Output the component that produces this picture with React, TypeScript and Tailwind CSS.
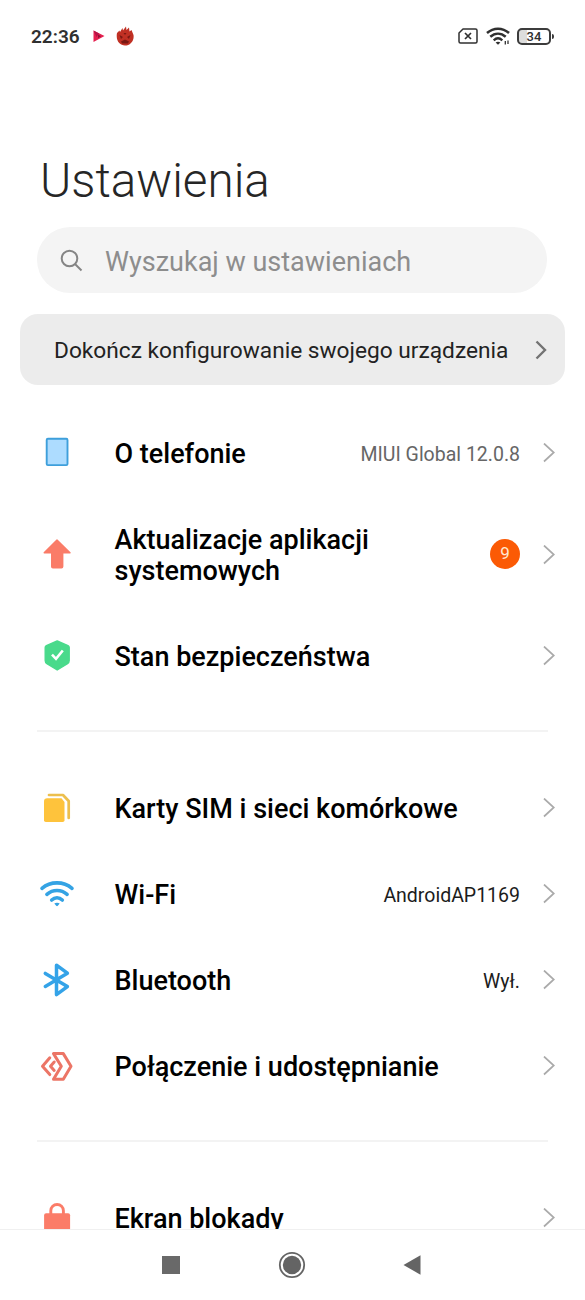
import React from "react";

type Row = {
  label: React.ReactNode;
  icon: React.ReactNode;
  value?: string;
  valueClass?: string;
  badge?: number;
  tall?: boolean;
};

function Icon({ children }: { children: React.ReactNode }) {
  return (
    <svg width="40" height="40" viewBox="0 0 40 40" fill="none" className="shrink-0">
      {children}
    </svg>
  );
}

const PhoneIcon = () => (
  <Icon>
    <rect x="9.7" y="5.7" width="20.8" height="26.4" rx="1.2" fill="#addcff" stroke="#3e9fdb" strokeWidth="1.9" />
  </Icon>
);

const UpdateIcon = () => (
  <Icon>
    <path
      d="M20 5 33 17.8H25.7V31.5a1.2 1.2 0 0 1-1.2 1.2h-8.6a1.2 1.2 0 0 1-1.2-1.2V17.8H7.2Z"
      fill="#fa7c68"
      stroke="#fa7c68"
      strokeWidth="1.4"
      strokeLinejoin="round"
    />
  </Icon>
);

const ShieldIcon = () => (
  <Icon>
    <path
      d="M20.2 5 31 9.6Q32.2 10.2 32.2 11.5V24.5Q32.2 26.5 30.500 27.700L20.200 34 9.900 27.700Q8.200 26.500 8.200 24.500V11.500Q8.200 10.200 9.400 9.600Z"
      fill="#49da8b"
      stroke="#49da8b"
      strokeWidth="1.4"
      strokeLinejoin="round"
    />
    <path d="m15 18.600 4 4.200 6.800-8.300" stroke="#fff" strokeWidth="2.600" />
  </Icon>
);

const SimIcon = () => (
  <Icon>
    <path d="M13.500 10.300H24.500L27.500 14V32.200a1.800 1.800 0 0 1-1.800 1.800H8.800A1.800 1.800 0 0 1 7 32.200V13.500Q7 10.300 10.200 10.300Z" fill="#fec33c" />
    <path d="M12 7H26L31.700 13V30" stroke="#ecbf4e" strokeWidth="2.700" strokeLinecap="round" strokeLinejoin="round" />
  </Icon>
);

const WifiIcon = () => (
  <Icon>
    <g stroke="#34a3e4" strokeWidth="3.600" strokeLinecap="round">
      <path d="M5 14.300C13.500 7 26.500 7 35 14.300" />
      <path d="M9.900 20.300C15.800 15.200 24.200 15.200 30.100 20.300" />
      <path d="M14.700 26C17.800 23.200 22.200 23.200 25.300 26" />
    </g>
    <path d="M17.300 29.600Q20 27.800 22.700 29.600L20.800 31.800Q20 32.600 19.200 31.800Z" fill="#34a3e4" />
  </Icon>
);

const BluetoothIcon = () => (
  <Icon>
    <path
      d="M8.300 13.400 30.400 26.600 19.500 34.600V5.200L30.400 13.200 8.300 26.400"
      stroke="#34a3e8"
      strokeWidth="3.500"
      strokeLinecap="round"
      strokeLinejoin="round"
    />
  </Icon>
);

const ShareIcon = () => (
  <Icon>
    <g stroke="#ec7566" strokeWidth="3" strokeLinejoin="round" strokeLinecap="round">
      <path d="M16.500 7.600H26.300L34 20.200 26.300 33.200H16.500L24.300 20.200Z" />
      <path d="M12.800 11.800 5.500 20.200 12.800 28.600" />
      <path d="M17.200 16 13.500 20.200 17.200 24.400" />
    </g>
  </Icon>
);

const LockIcon = () => (
  <Icon>
    <path d="M13.800 17V12.800a6.300 6.300 0 0 1 12.600 0V17" stroke="#fb7c68" strokeWidth="2.900" />
    <rect x="7.100" y="15.300" width="26" height="20" rx="2" fill="#fb7c68" />
  </Icon>
);

const groups: Row[][] = [
  [
    { label: "O telefonie", icon: <PhoneIcon />, value: "MIUI Global 12.0.8", valueClass: "text-[#666]" },
    { label: <>Aktualizacje aplikacji<br />systemowych</>, icon: <UpdateIcon />, badge: 9, tall: true },
    { label: "Stan bezpieczeństwa", icon: <ShieldIcon /> },
  ],
  [
    { label: "Karty SIM i sieci komórkowe", icon: <SimIcon /> },
    { label: "Wi-Fi", icon: <WifiIcon />, value: "AndroidAP1169", valueClass: "text-[#1c1c1c]" },
    { label: "Bluetooth", icon: <BluetoothIcon />, value: "Wył.", valueClass: "text-[#1c1c1c]" },
    { label: "Połączenie i udostępnianie", icon: <ShareIcon /> },
  ],
  [{ label: "Ekran blokady", icon: <LockIcon /> }],
];

function SettingsRow({ label, icon, value, valueClass, badge, tall }: Row) {
  return (
    <div className={`flex items-center pl-[37px] pr-[30px] ${tall ? "h-[117px]" : "h-[86px]"}`}>
      {icon}
      <div className="ml-[37.5px] flex-1 whitespace-nowrap pt-[3px] text-[27px] leading-[31px] font-medium text-black">
        {label}
      </div>
      {value && <span className={`pt-[3px] text-[19.5px] leading-6 ${valueClass}`}>{value}</span>}
      {badge && (
        <span className="mb-px flex size-[30px] items-center justify-center rounded-full bg-[#fb5a05] text-[17px] text-[#ffe9d0]">
          {badge}
        </span>
      )}
      <svg width="12" height="20" viewBox="0 0 12 20" fill="none" className="ml-[23px] shrink-0">
        <path d="M1 .5 10.800 9.500 1 18.500" stroke="#aaa" strokeWidth="1.700" />
      </svg>
    </div>
  );
}

function StatusBar() {
  return (
    <div className="flex h-[72px] items-center pl-[31px] pr-[31px] text-[#303030]">
      <span className="pt-[2px] text-[19px] font-semibold">22:36</span>
      <svg width="12" height="13" viewBox="0 0 12 13" className="ml-[13px]">
        <path d="M.5.500 11.500 6 .5 12Z" fill="#e5204f" />
        <path d="M.5.500 6 3.500 3.500 7Z" fill="#b71347" />
        <path d="m5 4.500 3 1.700-3 2Z" fill="#8f1238" />
      </svg>
      <svg width="18" height="20" viewBox="0 0 18 20" className="ml-[11px]">
        <path d="M1 7 3.500 4.500 4 6 6.500 2 7 4.500 10 .5 10.500 4 13 1.500 13.500 5.500 15.500 4 17.500 9C18.500 15 14 19.500 9 19.500S-.5 15 1 7Z" fill="#c03024" />
        <path d="M3.500 9 7 11 5 13ZM14.500 9 11 11l2 2ZM5 15.500 9 13.500l4 2-1 2H6ZM7.500 7H10.500L9 9Z" fill="#7a1812" />
      </svg>
      <div className="ml-auto flex items-center">
        <svg width="20" height="16" viewBox="0 0 20 16" fill="none" stroke="currentColor">
          <path d="M5 1H17.500Q19 1 19 2.500V13.500Q19 15 17.500 15H2.500Q1 15 1 13.500V5Z" strokeWidth="1.500" strokeLinejoin="round" />
          <path d="m7 5 6 6M13 5l-6 6" strokeWidth="1.700" />
        </svg>
        <svg width="24" height="18" viewBox="0 0 24 18" fill="none" stroke="currentColor" className="ml-[8px]">
          <path d="M1 6C7.500.2 16.500.2 23 6" strokeWidth="2.500" />
          <path d="M4.300 9.800C9 5.600 15 5.600 19.700 9.800" strokeWidth="2.500" />
          <path d="M7.700 13.300C10.300 10.900 13.700 10.900 16.300 13.300" strokeWidth="2.300" />
          <path d="M9.600 15.500Q12 13.800 14.400 15.500L12 17.800Z" fill="currentColor" stroke="none" />
          <path d="M19.300 14v3.500M22 13.500v3.500" strokeWidth="1.300" />
        </svg>
        <div className="ml-[7px] flex h-[17px] w-[34px] items-center justify-center rounded-[5px] border-2 border-[#3c3c3c] bg-[linear-gradient(90deg,#ddd_28%,#fff_28%)] text-[13px] leading-none font-medium">
          34
        </div>
        <div className="ml-px h-[5px] w-[2px] rounded-r bg-[#3c3c3c]" />
      </div>
    </div>
  );
}

export default function App() {
  return (
    <div className="flex h-[1300px] w-[585px] flex-col overflow-hidden bg-white font-[Roboto,sans-serif]">
      <StatusBar />

      <div className="flex min-h-0 flex-1 flex-col overflow-hidden">
        <h1 className="mt-[79px] ml-[40px] h-[60px] shrink-0 text-[47.6px] leading-[60px] font-light text-[#262626]">Ustawienia</h1>

        <div className="mt-[16px] ml-[37px] flex h-[66px] w-[510px] shrink-0 items-center rounded-full bg-[#f4f4f4] pl-[23px]">
          <svg width="23" height="23" viewBox="0 0 23 23" fill="none" stroke="#858585" strokeWidth="2">
            <circle cx="9.500" cy="9.500" r="7.800" />
            <path d="m15 15 6.500 6.500" />
          </svg>
          <span className="ml-[22px] pt-[4px] text-[27px] leading-8 text-[#8d8d8d]">Wyszukaj w ustawieniach</span>
        </div>

        <div className="mt-[21px] ml-[20px] flex h-[71px] w-[545px] shrink-0 items-center rounded-[18px] bg-[#ececec] pl-[34px] pr-[18px]">
          <span className="flex-1 whitespace-nowrap pt-[4px] text-[22.7px] text-[#222]">
            Dokończ konfigurowanie swojego urządzenia
          </span>
          <svg width="12" height="20" viewBox="0 0 12 20" fill="none">
            <path d="M1.500 1.500 10 10 1.500 18.500" stroke="#737373" strokeWidth="2.400" />
          </svg>
        </div>

        <div className="mt-[25px] shrink-0">
          {groups.map((rows, i) => (
            <React.Fragment key={i}>
              {i > 0 && <div className="mx-[37px] mt-[31px] mb-[33px] h-[2px] bg-[#f3f3f3]" />}
              {rows.map((row, j) => (
                <SettingsRow key={j} {...row} />
              ))}
            </React.Fragment>
          ))}
        </div>
      </div>

      <div className="flex h-[71px] shrink-0 items-center border-t border-[#f0f0f0] pl-[162px] text-[#646464]">
        <div className="size-[18px] bg-[#696969]" />
        <svg width="28" height="28" viewBox="0 0 28 28" className="ml-[98px]">
          <circle cx="14" cy="14" r="12.200" fill="none" stroke="currentColor" strokeWidth="1.800" />
          <circle cx="14" cy="14" r="9.200" fill="currentColor" />
        </svg>
        <svg width="18" height="20" viewBox="0 0 18 20" className="ml-[97px]">
          <path d="M17.500.3V19.700L.5 10Z" fill="currentColor" />
        </svg>
      </div>
    </div>
  );
}
